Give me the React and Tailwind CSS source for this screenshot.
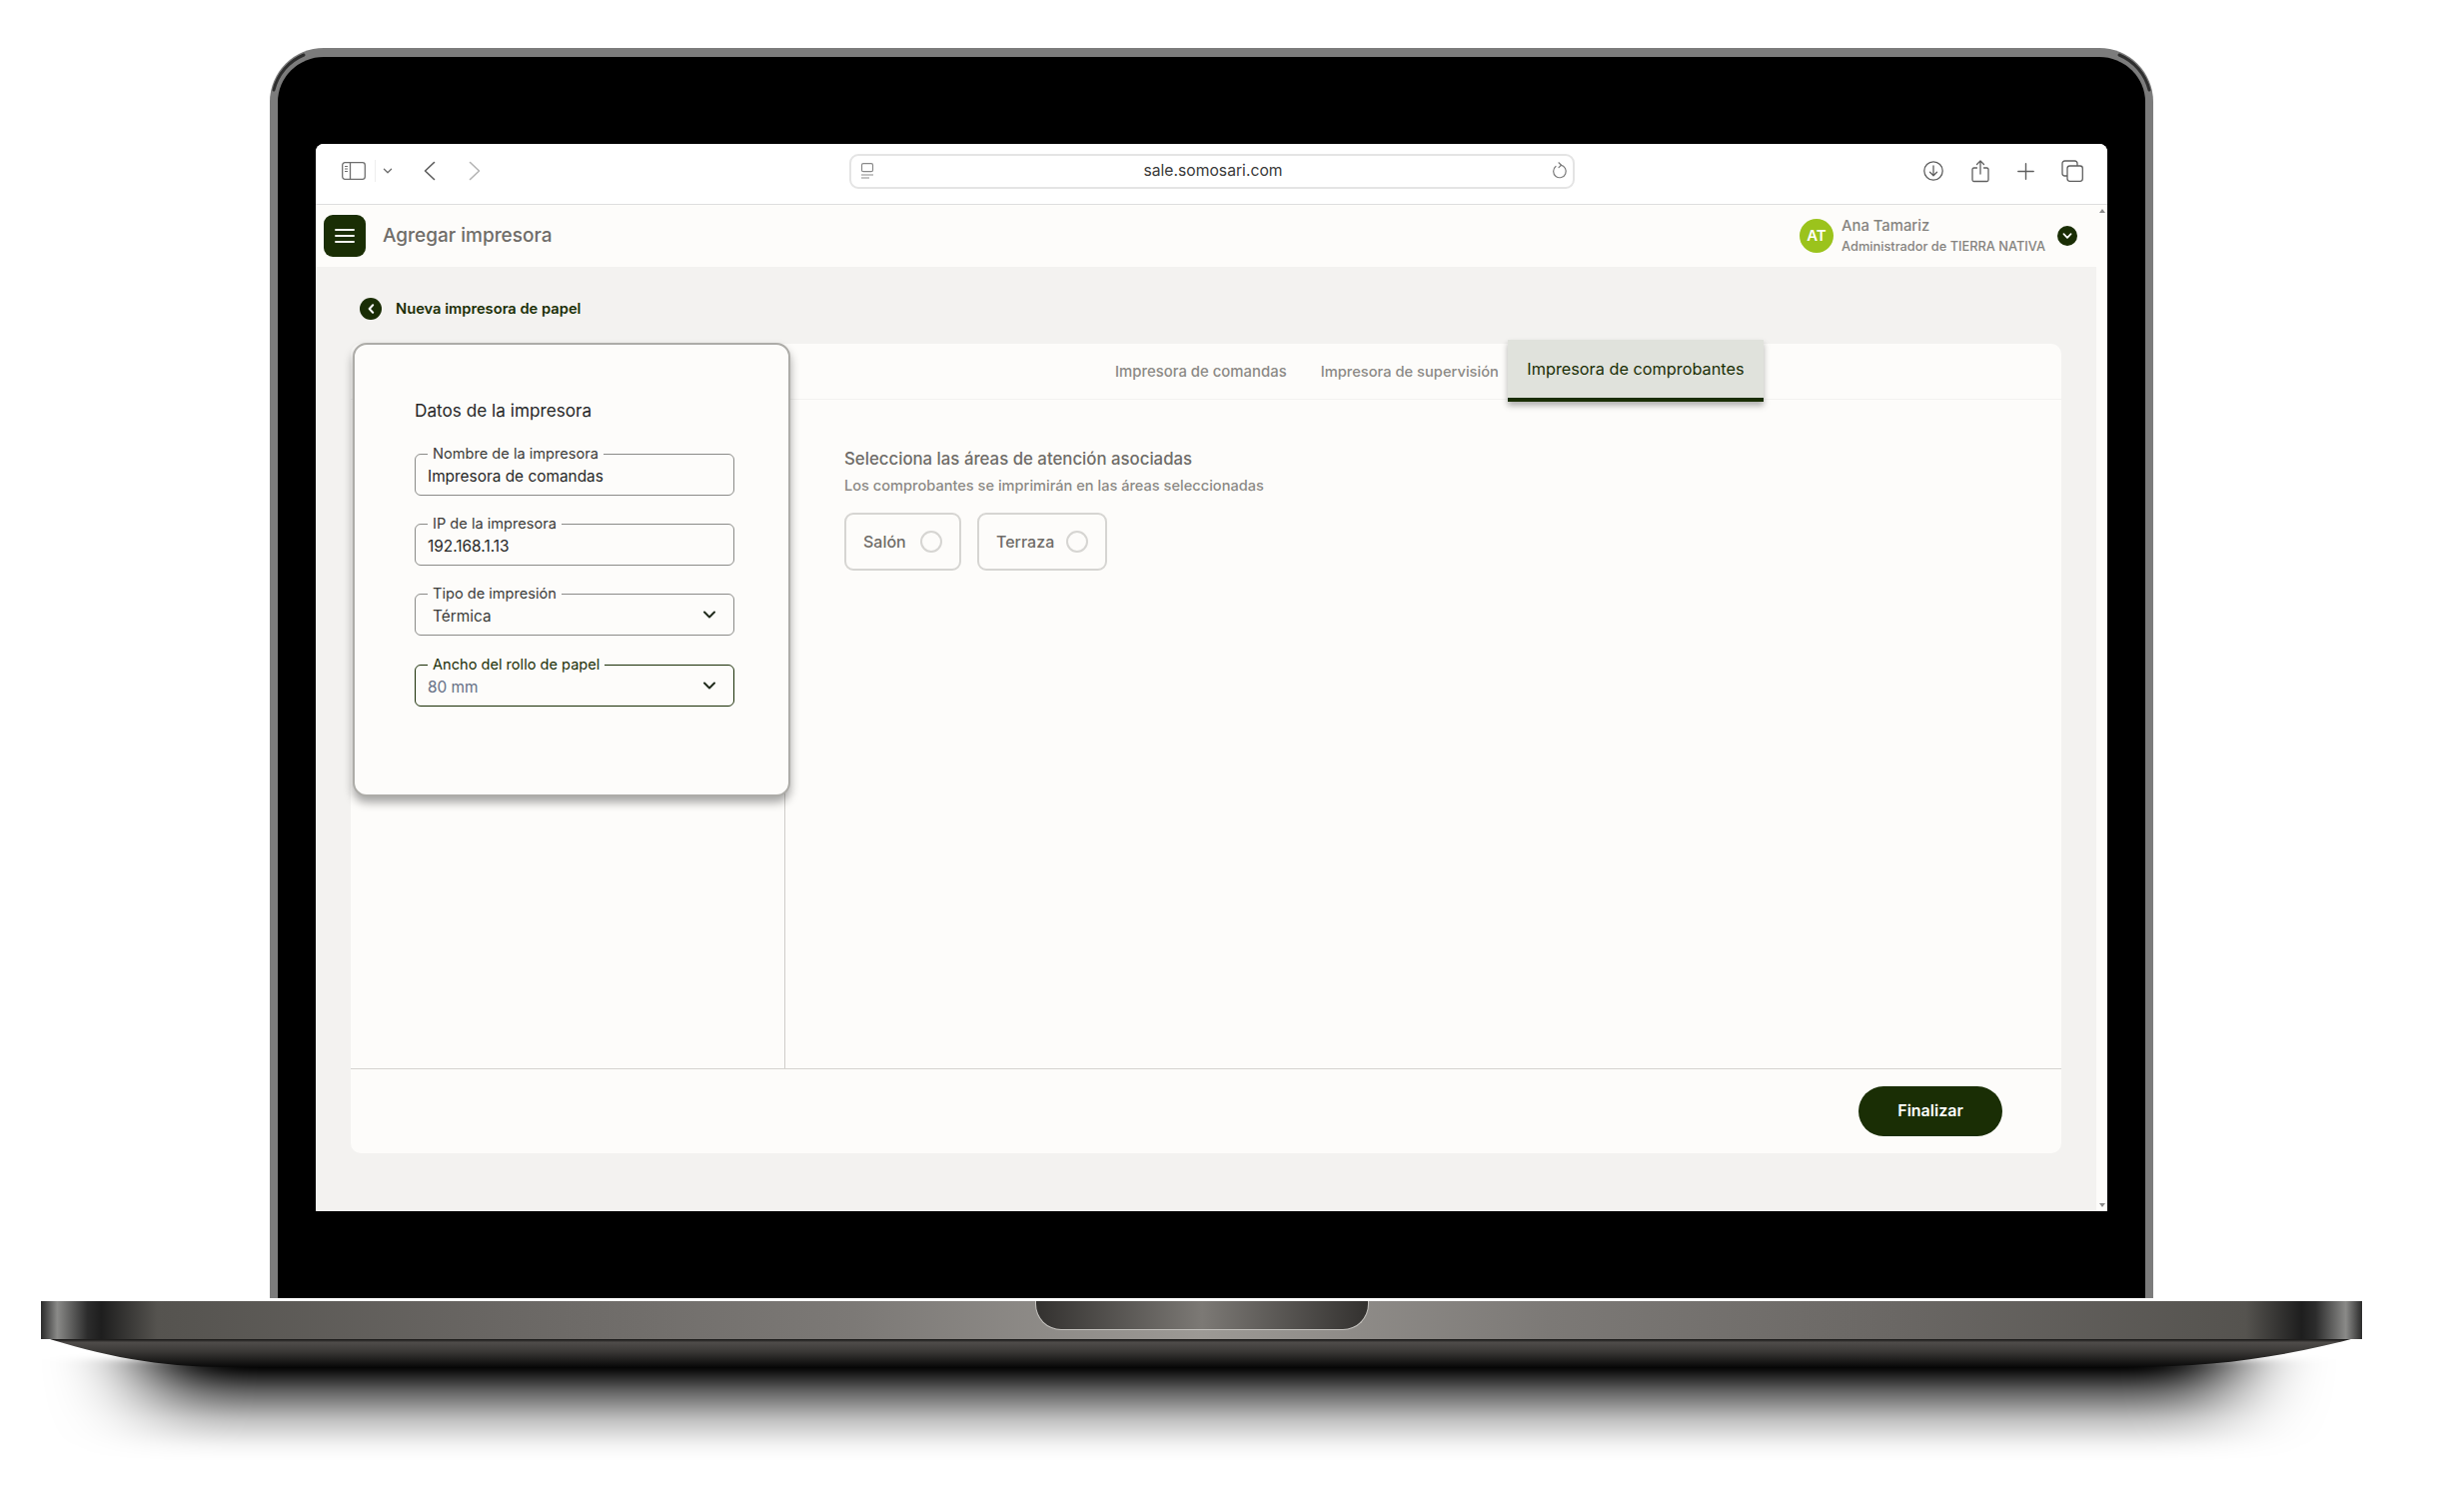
const green = '#1a2e05'

function Chevron({ className = '', stroke = '#1f2a1a', width = 2 }) {
  return (
    <svg viewBox="0 0 14 8" className={className} fill="none" stroke={stroke} strokeWidth={width} strokeLinecap="round" strokeLinejoin="round">
      <path d="M2 1.5 7 6.5 12 1.5" />
    </svg>
  )
}

function Toolbar() {
  return (
    <div className="flex h-[61px] shrink-0 items-center border-b border-[#dedede] bg-white pb-[6px] pl-[26px]">
      <svg viewBox="0 0 24 18" className="h-[18px] w-[24px]" fill="none" stroke="#6e6e6e" strokeWidth="1.3">
        <rect x="0.7" y="0.7" width="22.6" height="16.6" rx="2.5" />
        <path d="M8.5 1v16" />
        <path d="M3 4.5h3M3 7h3M3 9.500h3" strokeWidth="1" />
      </svg>
      <div className="ml-[9px] h-[22px] w-px bg-[#eeeeee]" />
      <Chevron className="ml-[7px] h-[6px] w-[10px]" stroke="#6e6e6e" width={1.8} />
      <svg viewBox="0 0 12 20" className="ml-[31px] h-[20px] w-[12px]" fill="none" stroke="#5c5c5c" strokeWidth="1.6" strokeLinecap="round" strokeLinejoin="round">
        <path d="M10.500 1.500 1.500 10l9 8.500" />
      </svg>
      <svg viewBox="0 0 12 20" className="ml-[33px] h-[20px] w-[12px]" fill="none" stroke="#b4b4b4" strokeWidth="1.6" strokeLinecap="round" strokeLinejoin="round">
        <path d="M1.500 1.500 10.500 10l-9 8.500" />
      </svg>
      <div className="ml-[369px] flex h-[35px] w-[726px] items-center rounded-[9px] border-2 border-[#e4e4e4] pl-[9px] pr-[5px]">
        <svg viewBox="0 0 14 16" className="h-[16px] w-[14px]" fill="none" stroke="#8a8a8a" strokeWidth="1.2">
          <rect x="1.500" y="0.700" width="11" height="8" rx="1.500" />
          <path d="M1 12h12M1 15h8" />
        </svg>
        <span className="flex-1 text-center text-[15.700px] leading-[20px] text-[#3a3a3a]">sale.somosari.com</span>
        <svg viewBox="0 0 16 18" className="h-[18px] w-[16px]" fill="none" stroke="#7a7a7a" strokeWidth="1.200" strokeLinecap="round" strokeLinejoin="round">
          <path d="M9 3.200A6.300 6.300 0 1 1 4 4.500" />
          <path d="M7 0.800 9.500 3.200 7 5.600" />
        </svg>
      </div>
      <svg viewBox="0 0 20 20" className="ml-[349px] h-[20px] w-[20px]" fill="none" stroke="#5f5f5f" strokeWidth="1.300" strokeLinecap="round" strokeLinejoin="round">
        <circle cx="10" cy="10" r="9.200" />
        <path d="M10 5v9.500M6.500 11.200 10 14.700l3.500-3.500" />
      </svg>
      <svg viewBox="0 0 18 23" className="ml-[28px] h-[23px] w-[18px]" fill="none" stroke="#5f5f5f" strokeWidth="1.300" strokeLinecap="round" strokeLinejoin="round">
        <path d="M5.500 8H2.500a1.500 1.500 0 0 0-1.500 1.500v10.500A1.500 1.500 0 0 0 2.500 21.500h13a1.500 1.500 0 0 0 1.500-1.500V9.500A1.500 1.500 0 0 0 15.500 8h-3" />
        <path d="M9 14V1.200M5.500 4.500 9 1l3.500 3.500" />
      </svg>
      <svg viewBox="0 0 17 17" className="ml-[28px] h-[17px] w-[17px]" fill="none" stroke="#5f5f5f" strokeWidth="1.400" strokeLinecap="round">
        <path d="M8.500 0.800v15.400M0.800 8.500h15.400" />
      </svg>
      <svg viewBox="0 0 22 22" className="ml-[27px] h-[22px] w-[22px]" fill="none" stroke="#5f5f5f" strokeWidth="1.300" strokeLinejoin="round">
        <rect x="6" y="6" width="15.300" height="15.300" rx="2.500" />
        <path d="M6 16H3.500A2.500 2.500 0 0 1 1 13.500V3.500A2.500 2.500 0 0 1 3.500 1h10A2.500 2.500 0 0 1 16 3.500V6" />
      </svg>
    </div>
  )
}

function AppHeader() {
  return (
    <div className="flex h-[62px] shrink-0 items-center bg-[#fdfcfa] pl-[8px] pr-[19px]">
      <div className="flex h-[42px] w-[42px] items-center justify-center rounded-[9px] bg-[#1a2e05]">
        <svg viewBox="0 0 20 16" className="h-[16px] w-[20px]" fill="none" stroke="#f5f5f0" strokeWidth="2" strokeLinecap="round">
          <path d="M1 2h18M1 8h18M1 14h18" />
        </svg>
      </div>
      <span className="ml-[17px] text-[19px] font-medium leading-[26px] text-[#6f6c68]">Agregar impresora</span>
      <div className="ml-auto flex h-[34px] w-[34px] items-center justify-center rounded-full bg-[#9bc31c] text-[15px] font-semibold text-white">AT</div>
      <div className="ml-[8px] flex flex-col">
        <span className="text-[14.800px] font-medium leading-[20px] text-[#85837f]">Ana Tamariz</span>
        <span className="mt-[1px] text-[12.800px] font-medium leading-[20px] text-[#85837f]">Administrador de TIERRA NATIVA</span>
      </div>
      <div className="ml-[12px] flex h-[20px] w-[20px] items-center justify-center rounded-full bg-[#1a2e05]">
        <Chevron className="h-[6px] w-[10px]" stroke="#ffffff" width={2.4} />
      </div>
    </div>
  )
}

function Field({ label, value, select, active, valueClass = 'pl-[12px] text-[#262626]' }) {
  return (
    <div className={`relative flex h-[42px] w-[320px] items-center rounded-[6px] border pr-[17px] ${active ? 'border-[#1a2e05]' : 'border-[#8b8b88]'}`}>
      <span className={`absolute left-[12px] top-[-11.500px] bg-[#fdfcfa] px-[5px] text-[14.600px] leading-[20px] ${active ? 'text-[#1a2e05]' : 'text-[#3a3a38]'}`}>
        {label}
      </span>
      <span className={`pt-[3px] text-[15.400px] leading-[20px] ${valueClass}`}>{value}</span>
      {select && <Chevron className="ml-auto h-[8px] w-[14px]" />}
    </div>
  )
}

function PrinterCard() {
  return (
    <div className="absolute left-[2px] top-[-1px] z-20 flex h-[454px] w-[438px] flex-col rounded-[14px] border-2 border-[#adaca8] bg-[#fdfcfa] pl-[60px] pt-[54px] shadow-[0_6px_10px_rgba(0,0,0,0.35)]">
      <h2 className="text-[17.200px] font-normal leading-[24px] text-[#262626]">Datos de la impresora</h2>
      <div className="mt-[31px] flex flex-col gap-[28px]">
        <Field label="Nombre de la impresora" value="Impresora de comandas" />
        <Field label="IP de la impresora" value="192.168.1.13" />
        <Field label="Tipo de impresión" value="Térmica" select valueClass="pl-[17px] text-[#3a3a38]" />
        <div className="mt-px">
          <Field label="Ancho del rollo de papel" value="80 mm" select active valueClass="pl-[12px] text-[#667085]" />
        </div>
      </div>
    </div>
  )
}

function AreaOption({ label, width }) {
  return (
    <div className={`flex h-[58px] items-center justify-between rounded-[9px] border-2 border-[#d6d5d2] pl-[17px] pr-[17px] ${width}`}>
      <span className="text-[16px] font-medium leading-[22px] text-[#6f6c68]">{label}</span>
      <span className="h-[22px] w-[22px] rounded-full border-2 border-[#d6d5d2]" />
    </div>
  )
}

function Panel() {
  return (
    <div className="relative mt-[24px] flex h-[810px] flex-col rounded-[10px] bg-[#fdfcfa]">
      <PrinterCard />
      <div className="flex h-[56px] shrink-0 items-start border-b border-[#f3f2f0] pl-[765px]">
        <span className="mt-[18px] text-[14.900px] font-medium leading-[20px] text-[#8c8a86]">Impresora de comandas</span>
        <span className="ml-[34px] mt-[18px] text-[14.700px] font-medium leading-[20px] text-[#8c8a86]">Impresora de supervisión</span>
        <div className="z-10 ml-[9px] mt-[-4px] flex h-[62px] w-[256px] items-center justify-center border-b-4 border-[#1a2e05] bg-[#e0e2dc] text-[16.300px] leading-[20px] text-[#1a2e05] shadow-[0_4px_6px_rgba(0,0,0,0.3)]">
          Impresora de comprobantes
        </div>
      </div>
      <div className="flex flex-1">
        <div className="w-[435px] shrink-0 border-r border-[#cfcdc9]" />
        <div className="flex-1 pl-[59px] pt-[47px]">
          <h3 className="text-[16.800px] font-medium leading-[24px] text-[#6f6c68]">Selecciona las áreas de atención asociadas</h3>
          <p className="mt-[5px] text-[14.600px] font-medium leading-[20px] text-[#8c8a86]">Los comprobantes se imprimirán en las áreas seleccionadas</p>
          <div className="mt-[17px] flex gap-[16px]">
            <AreaOption label="Salón" width="w-[117px]" />
            <AreaOption label="Terraza" width="w-[130px]" />
          </div>
        </div>
      </div>
      <div className="flex h-[85px] shrink-0 items-center justify-end border-t border-[#d5d3cf] pr-[59px]">
        <button className="h-[50px] w-[144px] rounded-full bg-[#1a2e05] pb-[2px] text-[16px] font-semibold text-white">Finalizar</button>
      </div>
    </div>
  )
}

function Screen() {
  return (
    <div className="flex h-[1068px] w-[1793px] flex-col overflow-hidden rounded-t-[8px] bg-white">
      <Toolbar />
      <div className="flex min-h-0 flex-1">
        <div className="flex min-w-0 flex-1 flex-col">
          <AppHeader />
          <main className="flex-1 bg-[#f3f2f0] px-[35px] pt-[31px]">
            <div className="flex h-[22px] items-center pl-[9px]">
              <div className="flex h-[22px] w-[22px] items-center justify-center rounded-full bg-[#1a2e05]">
                <svg viewBox="0 0 8 12" className="h-[10px] w-[7px]" fill="none" stroke="#ffffff" strokeWidth="2.400" strokeLinecap="round" strokeLinejoin="round">
                  <path d="M6 1.500 1.800 6 6 10.500" />
                </svg>
              </div>
              <span className="ml-[14px] text-[14.700px] font-semibold leading-[20px] text-[#1a2e05]">Nueva impresora de papel</span>
            </div>
            <Panel />
          </main>
        </div>
        <div className="flex w-[11px] shrink-0 flex-col items-center justify-between bg-[#fdfcfa] py-[4px]">
          <span className="h-0 w-0 border-x-[3px] border-b-[4px] border-x-transparent border-b-[#8a8a8a]" />
          <span className="h-0 w-0 border-x-[3px] border-t-[4px] border-x-transparent border-t-[#8a8a8a]" />
        </div>
      </div>
    </div>
  )
}

function Base() {
  return (
    <div className="relative ml-[41px] flex h-[66px] w-[2323px] flex-col">
      <div className="relative h-[38px] bg-[linear-gradient(90deg,#2a2a2a_0%,#8a8a88_0.7%,#2c2c2c_2%,#1e1e1e_2.6%,#55534f_5%,#6a6764_20%,#7c7976_35%,#9c9995_50%,#7c7976_65%,#6a6764_80%,#55534f_95%,#1e1e1e_97.400%,#2c2c2c_98%,#8a8a88_99.300%,#2a2a2a_100%)]">
        <div className="ml-[995px] h-[29px] w-[334px] rounded-b-[26px] border-x border-b border-[#c4c2be] bg-[linear-gradient(90deg,#33312f,#7c7975_50%,#33312f)] border-t-0" />
      </div>
      <svg viewBox="0 0 2323 31" className="-mt-[3px] block h-[31px] w-[2323px]" preserveAspectRatio="none">
        <defs>
          <linearGradient id="baseLower" x1="0" y1="0" x2="0" y2="1">
            <stop offset="0" stopColor="#1f1e1d" />
            <stop offset="0.12" stopColor="#1f1e1d" />
            <stop offset="0.2" stopColor="#4f4c4a" />
            <stop offset="0.5" stopColor="#3a3836" />
            <stop offset="1" stopColor="#080808" />
          </linearGradient>
        </defs>
        <path d="M0 0H2323C2250 20 2180 31 2090 31H183C120 31 60 20 0 0Z" fill="url(#baseLower)" />
      </svg>
    </div>
  )
}

export default function App() {
  return (
    <div className="relative h-[1512px] w-[2466px] overflow-hidden bg-white pt-[48px] font-['Inter',sans-serif]">
      <svg viewBox="0 0 2466 172" className="absolute left-0 top-[1340px] h-[172px] w-[2466px]">
        <defs>
          <linearGradient id="shade" x1="0" y1="0" x2="0" y2="1">
            <stop offset="0" stopColor="#000000" stopOpacity="1" />
            <stop offset="0.08" stopColor="#000000" stopOpacity="1" />
            <stop offset="0.33" stopColor="#000000" stopOpacity="0.6" />
            <stop offset="0.6" stopColor="#000000" stopOpacity="0.25" />
            <stop offset="0.87" stopColor="#000000" stopOpacity="0.04" />
            <stop offset="1" stopColor="#000000" stopOpacity="0" />
          </linearGradient>
          <filter id="soft" x="-10%" y="-10%" width="120%" height="120%">
            <feGaussianBlur stdDeviation="45 3" />
          </filter>
        </defs>
        <rect x="150" y="20" width="2080" height="100" fill="url(#shade)" filter="url(#soft)" />
      </svg>
      <div className="relative ml-[270px] flex h-[1251px] w-[1885px] flex-col rounded-t-[54px] border-x-[8px] border-t-[9px] border-[#7c7c7c] bg-black px-[38px] pt-[87px]">
        <svg viewBox="0 0 1885 60" className="absolute left-[-8px] top-[-9px] h-[60px] w-[1885px]" fill="none" stroke="#2e2e2e" strokeWidth="3" strokeLinecap="round">
          <path d="M4 42A51 51 0 0 1 34 7" />
          <path d="M1881 42A51 51 0 0 0 1851 7" />
        </svg>
        <Screen />
      </div>
      <div className="relative mt-[3px]">
        <Base />
      </div>
    </div>
  )
}
